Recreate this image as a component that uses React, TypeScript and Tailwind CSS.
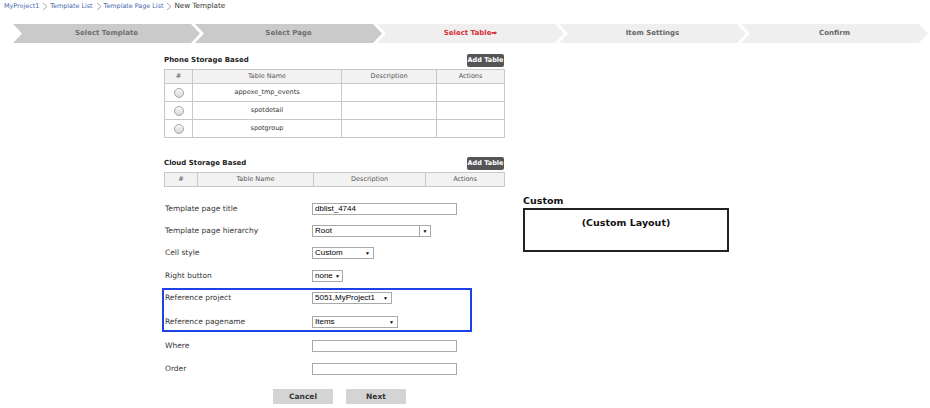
import type { ReactNode } from 'react';

const STEPS = [
  { label: 'Select Template', done: true },
  { label: 'Select Page', done: true },
  { label: 'Select Table\u27a1', active: true },
  { label: 'Item Settings' },
  { label: 'Confirm' },
];

const PHONE_TABLES = ['appexe_tmp_events', 'spotdetail', 'spotgroup'];

function Crumb({ children, last }: { children: ReactNode; last?: boolean }) {
  return (
    <span className="flex items-center">
      <span className={last ? 'text-[7.2px] text-[#333]' : 'text-[#4a66b0]'}>{children}</span>
      {!last && (
        <svg width="9" height="9" viewBox="0 0 9 9" className="mx-[1px]">
          <path d="M3 1 L7 4.5 L3 8" fill="none" stroke="#aaa" strokeWidth="1" />
        </svg>
      )}
    </span>
  );
}

function AddTableButton() {
  return (
    <button className="h-[13px] w-[37px] rounded-[2px] bg-[#555] text-[6.5px] font-bold leading-[13px] text-white">
      Add Table
    </button>
  );
}

function Radio() {
  return (
    <span className="mx-auto block h-[10px] w-[10px] rounded-full border border-[#a8a8a8] bg-gradient-to-b from-[#fafafa] to-[#d6d6d6]" />
  );
}

function TextInput({ value = '' }: { value?: string }) {
  return (
    <div className="h-[12px] w-[145px] border border-[#a9a9a9] bg-white pl-[2px] font-['Liberation_Sans',Arial,sans-serif] text-[8px] leading-[10px] text-black">
      {value}
    </div>
  );
}

function Select({ value, width, divider }: { value: string; width: string; divider?: boolean }) {
  return (
    <div
      className={`flex h-[12px] items-center justify-between border border-[#a9a9a9] bg-white font-['Liberation_Sans',Arial,sans-serif] text-[8px] leading-[10px] text-black ${width}`}
    >
      <span className="pl-[2px]">{value}</span>
      <span
        className={`flex h-full w-[11px] items-center justify-center text-[5px] ${divider ? 'border-l border-[#a9a9a9]' : ''}`}
      >
        ▼
      </span>
    </div>
  );
}

function Row({ label, height, children }: { label: string; height: string; children: ReactNode }) {
  return (
    <div className={`flex items-center ${height}`}>
      <div className="w-[147px] text-[7.5px] text-[#333]">{label}</div>
      {children}
    </div>
  );
}

export default function App() {
  return (
    <div className="relative h-[408px] w-[930px] overflow-hidden bg-white font-['DejaVu_Sans',Verdana,sans-serif]">
      {/* breadcrumb */}
      <div className="flex h-[12px] items-center pl-[4px] pt-[1px] text-[6.4px]">
        <Crumb>MyProject1</Crumb>
        <Crumb>Template List</Crumb>
        <Crumb>Template Page List</Crumb>
        <Crumb last>New Template</Crumb>
      </div>

      {/* steps */}
      <div className="mt-[12px] flex pl-[13px]">
        {STEPS.map((s, i) => (
          <div
            key={s.label}
            className={`flex h-[19px] w-[187px] shrink-0 items-center justify-center text-[7px] font-bold [clip-path:polygon(0_0,calc(100%-9px)_0,100%_50%,calc(100%-9px)_100%,0_100%,9px_50%)] ${
              i > 0 ? '-ml-[5px]' : ''
            } ${s.done ? 'bg-[#cacaca] text-[#6f6f6f]' : 'bg-[#efefef] text-[#666]'} ${s.active ? 'text-[#d6303a]' : ''}`}
          >
            {s.label}
          </div>
        ))}
      </div>

      <div className="mt-[11px] flex">
        {/* left column */}
        <div className="ml-[162px] w-[345px]">
          <div className="pl-[2px] pr-[3px]">
            <div className="flex h-[13px] items-center justify-between">
              <span className="text-[7px] font-bold text-[#222]">Phone Storage Based</span>
              <AddTableButton />
            </div>
            <table className="mt-[2px] w-[340px] table-fixed border-collapse text-[6.5px] text-[#444]">
              <colgroup>
                <col className="w-[28px]" />
                <col className="w-[149px]" />
                <col className="w-[95px]" />
                <col className="w-[68px]" />
              </colgroup>
              <thead>
                <tr className="h-[14px] bg-[#f2f2f2] text-[#555]">
                  <th className="border border-[#c8c8c8] font-normal">#</th>
                  <th className="border border-[#c8c8c8] font-normal">Table Name</th>
                  <th className="border border-[#c8c8c8] font-normal">Description</th>
                  <th className="border border-[#c8c8c8] font-normal">Actions</th>
                </tr>
              </thead>
              <tbody>
                {PHONE_TABLES.map((t) => (
                  <tr key={t} className="h-[18px]">
                    <td className="border border-[#c8c8c8]">
                      <Radio />
                    </td>
                    <td className="border border-[#c8c8c8] text-center text-[#333]">{t}</td>
                    <td className="border border-[#c8c8c8]" />
                    <td className="border border-[#c8c8c8]" />
                  </tr>
                ))}
              </tbody>
            </table>

            <div className="mt-[19px] flex h-[13px] items-center justify-between">
              <span className="text-[7px] font-bold text-[#222]">Cloud Storage Based</span>
              <AddTableButton />
            </div>
            <table className="mt-[2px] w-[340px] table-fixed border-collapse text-[6.5px] text-[#555]">
              <colgroup>
                <col className="w-[33px]" />
                <col className="w-[116px]" />
                <col className="w-[112px]" />
                <col className="w-[79px]" />
              </colgroup>
              <thead>
                <tr className="h-[14px] bg-[#f2f2f2]">
                  <th className="border border-[#c8c8c8] font-normal">#</th>
                  <th className="border border-[#c8c8c8] font-normal">Table Name</th>
                  <th className="border border-[#c8c8c8] font-normal">Description</th>
                  <th className="border border-[#c8c8c8] font-normal">Actions</th>
                </tr>
              </thead>
            </table>
          </div>

          {/* form */}
          <div className="mt-[11px] w-[310px]">
            <div className="pl-[3px]">
              <Row label="Template page title" height="h-[22px]">
                <TextInput value="dblist_4744" />
              </Row>
              <Row label="Template page hierarchy" height="h-[22px]">
                <Select value="Root" width="w-[119px]" divider />
              </Row>
              <Row label="Cell style" height="h-[22px]">
                <Select value="Custom" width="w-[62px]" />
              </Row>
              <Row label="Right button" height="h-[24px]">
                <Select value="none" width="w-[31px]" />
              </Row>
            </div>
            <div className="flex h-[44px] flex-col justify-center gap-[8px] border-2 border-[#1d43e6] pl-[1px]">
              <Row label="Reference project" height="h-[16px]">
                <Select value="5051,MyProject1" width="w-[80px]" />
              </Row>
              <Row label="Reference pagename" height="h-[16px]">
                <Select value="Items" width="w-[86px]" />
              </Row>
            </div>
            <div className="mt-[2px] pl-[3px]">
              <Row label="Where" height="h-[23px]">
                <TextInput />
              </Row>
              <Row label="Order" height="h-[23px]">
                <TextInput />
              </Row>
            </div>
            <div className="mt-[9px] flex pl-[111px]">
              <button className="h-[15px] w-[60px] bg-[#d4d4d4] text-[7.5px] font-bold text-[#333]">Cancel</button>
              <button className="ml-[13px] h-[15px] w-[60px] bg-[#d4d4d4] text-[7.5px] font-bold text-[#333]">Next</button>
            </div>
          </div>
        </div>

        {/* custom preview */}
        <div className="ml-[16px] mt-[141px]">
          <div className="text-[9.5px] font-bold leading-[12px] text-[#111]">Custom</div>
          <div className="mt-[1px] h-[44px] w-[206px] border-2 border-[#222] pt-[6px] text-center text-[9.5px] font-bold text-[#111]">
            (Custom Layout)
          </div>
        </div>
      </div>
    </div>
  );
}
